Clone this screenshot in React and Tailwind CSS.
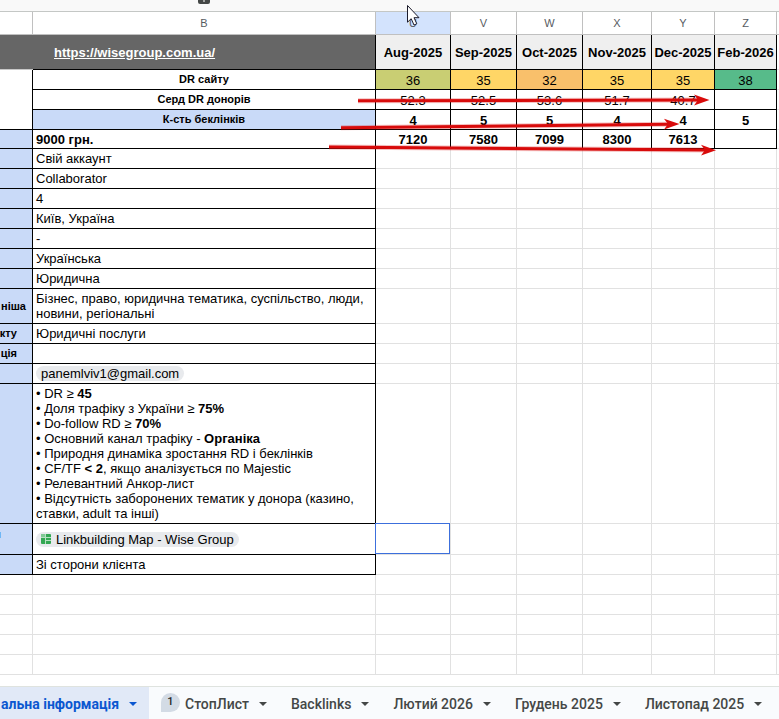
import React from "react";

const months = [
  { col: "U", name: "Aug-2025", dr: 36, color: "bg-[#c9ce73]", avg: "52.3", links: 4, spent: "7120" },
  { col: "V", name: "Sep-2025", dr: 35, color: "bg-[#ffd666]", avg: "52.5", links: 5, spent: "7580" },
  { col: "W", name: "Oct-2025", dr: 32, color: "bg-[#f9c06b]", avg: "53.6", links: 5, spent: "7099" },
  { col: "X", name: "Nov-2025", dr: 35, color: "bg-[#ffd666]", avg: "51.7", links: 4, spent: "8300" },
  { col: "Y", name: "Dec-2025", dr: 35, color: "bg-[#ffd666]", avg: "40.7", links: 4, spent: "7613" },
  { col: "Z", name: "Feb-2026", dr: 38, color: "bg-[#57bb8a]", avg: "", links: 5, spent: "" },
];

const cell = "border-r border-b px-[3px] overflow-hidden";
const dark = `${cell} border-black py-[2px] align-bottom`;
const light = `${cell} border-[#e1e1e1]`;
const number = `${cell} border-black pt-[3px] pb-px text-center align-bottom`;

function Requirements() {
  return (
    <ul>
      <li>• DR ≥ <b>45</b></li>
      <li>• Доля трафіку з України ≥ <b>75%</b></li>
      <li>• Do-follow RD ≥ <b>70%</b></li>
      <li>• Основний канал трафіку - <b>Органіка</b></li>
      <li>• Природня динаміка зростання RD і беклінків</li>
      <li>• CF/TF <b>&lt; 2</b>, якщо аналізується по Majestic</li>
      <li>• Релевантний Анкор-лист</li>
      <li>• Відсутність заборонених тематик у донора (казино, ставки, adult та інші)</li>
    </ul>
  );
}

function SheetIcon() {
  return (
    <svg className="size-[10px]" viewBox="0 0 10 10" aria-hidden="true">
      <rect width="10" height="10" rx="1" fill="#34a853" />
      <path d="M0 3.5h10M4.5 0v10M4.5 6.5h5.5" stroke="#b7e1c2" strokeWidth="1" />
      <path d="M0 0h4v3h-4z" fill="#81c995" />
    </svg>
  );
}

const chip = "flex w-fit items-center h-[15px] rounded-full bg-[#e8eaed] px-[5px]";

// Rows of the brief, with the visible end of each label in column A
const details = [
  { height: "h-[20px]", value: "Свій аккаунт" },
  { height: "h-[20px]", value: "Collaborator" },
  { height: "h-[20px]", value: "4" },
  { height: "h-[20px]", value: "Київ, Україна" },
  { height: "h-[20px]", value: "-" },
  { height: "h-[20px]", value: "Українська" },
  { height: "h-[20px]", value: "Юридична" },
  {
    height: "h-[35px]",
    label: "ніша",
    pad: "pr-[6px]",
    value: "Бізнес, право, юридична тематика, суспільство, люди, новини, регіональні",
  },
  { height: "h-[20px]", label: "кту", pad: "pr-[15px]", value: "Юридичні послуги" },
  { height: "h-[20px]", label: "ція", pad: "pr-[15px]", value: "" },
  { height: "h-[20px]", value: <span className={chip}>panemlviv1@gmail.com</span> },
  { height: "h-[140px]", value: <Requirements /> },
  {
    height: "h-[31px]",
    middle: true,
    selected: true,
    value: (
      <span className={`${chip} gap-[5px]`}>
        <SheetIcon />
        Linkbuilding Map - Wise Group
      </span>
    ),
  },
  { height: "h-[20px]", value: "Зі сторони клієнта" },
];

const emptyRows = [1, 2, 3, 4, 5];

function ColumnHeader({ children, active }) {
  return (
    <th
      className={`border-r border-b border-[#c0c0c0] text-[11px] leading-[15px] font-normal text-[#575b5f] ${
        active ? "bg-[#d3e3fd]" : "bg-white"
      }`}
    >
      {children}
    </th>
  );
}

function BlankCells({ selected }) {
  return (
    <>
      {months.map((m) => (
        <td key={m.col} className="relative border-r border-b border-[#e1e1e1]">
          {selected && m.col === "U" && (
            <div className="absolute -top-px -left-px right-0 bottom-0 border border-[#3c6fdc]" />
          )}
        </td>
      ))}
      <td className="border-b border-[#e1e1e1]" />
    </>
  );
}

function Sheet() {
  return (
    <table className="w-full table-fixed border-separate border-spacing-0 text-[13px] leading-[15px] text-black">
      <colgroup>
        <col className="w-[33px]" />
        <col />
        <col className="w-[75px]" />
        <col className="w-[66px]" />
        <col className="w-[66px]" />
        <col className="w-[69px]" />
        <col className="w-[63px]" />
        <col className="w-[62px]" />
        <col className="w-[2px]" />
      </colgroup>
      <thead>
        <tr className="h-[23px]">
          <ColumnHeader />
          <ColumnHeader>B</ColumnHeader>
          {months.map((m) => (
            <ColumnHeader key={m.col} active={m.col === "U"}>{m.col}</ColumnHeader>
          ))}
          <th className="border-b border-[#c0c0c0]" />
        </tr>
      </thead>
      <tbody>
        <tr className="h-[35px]">
          <td className="border-b border-[#c8c8c8] bg-[#666666]" />
          <td className="border-r border-b border-black bg-[#666666] pl-[21px] font-bold text-white">
            <a href="https://wisegroup.com.ua/" className="underline">https://wisegroup.com.ua/</a>
          </td>
          {months.map((m) => (
            <td key={m.col} className="border-r border-b border-black bg-[#efefef] text-center font-bold whitespace-nowrap">
              {m.name}
            </td>
          ))}
          <td className="border-b border-[#e1e1e1]" />
        </tr>
        <tr className="h-[20px]">
          <td rowSpan={3} className="border-r border-b border-black" />
          <td className={`${dark} text-center text-[11px] font-bold`}>DR сайту</td>
          {months.map((m) => (
            <td key={m.col} className={`${number} ${m.color}`}>{m.dr}</td>
          ))}
          <td className="border-b border-[#e1e1e1]" />
        </tr>
        <tr className="h-[20px]">
          <td className={`${dark} text-center text-[11px] font-bold`}>Серд DR донорів</td>
          {months.map((m) => (
            <td key={m.col} className={number}>{m.avg}</td>
          ))}
          <td className="border-b border-[#e1e1e1]" />
        </tr>
        <tr className="h-[20px]">
          <td className={`${dark} bg-[#c9daf8] text-center text-[11px] font-bold`}>К-сть беклінків</td>
          {months.map((m) => (
            <td key={m.col} className={`${number} font-bold`}>{m.links}</td>
          ))}
          <td className="border-b border-[#e1e1e1]" />
        </tr>
        <tr className="h-[19px]">
          <td className="border-r border-b border-black bg-[#c9daf8]" />
          <td className={`${cell} border-black font-bold`}>9000 грн.</td>
          {months.map((m) => (
            <td key={m.col} className={`${cell} border-black text-center font-bold`}>{m.spent}</td>
          ))}
          <td className="border-b border-[#e1e1e1]" />
        </tr>
        {details.map((row, i) => (
          <tr key={i} className={row.height}>
            <td className="overflow-hidden border-r border-b border-black bg-[#c9daf8] text-[11px] font-bold">
              {row.label && <div className={`flex justify-end ${row.pad}`}>{row.label}</div>}
              {row.selected && <div className="mb-2 h-[6px] w-px bg-[#6fb7f5]" />}
            </td>
            <td className={row.middle ? `${cell} border-black align-middle` : dark}>{row.value}</td>
            <BlankCells selected={row.selected} />
          </tr>
        ))}
        {emptyRows.map((n) => (
          <tr key={n} className="h-[20px]">
            <td className={light} />
            <td className={light} />
            <BlankCells />
          </tr>
        ))}
      </tbody>
    </table>
  );
}

// Red trend arrows drawn over the table, plus the mouse pointer
function Annotations() {
  return (
    <svg className="pointer-events-none absolute top-0 right-0" width="460" height="160" viewBox="319 0 460 160" aria-hidden="true">
      <g stroke="#d90b0b" strokeWidth="3">
        <path d="M358 100.8L700 100" />
        <path d="M341 127.8L670 124.2" />
        <path d="M329 147L707 150" />
      </g>
      <g stroke="#d90b0b" strokeWidth="5" strokeOpacity="0.25">
        <path d="M358 100.8L698 100" />
        <path d="M341 127.8L668 124.2" />
        <path d="M329 147L704 150" />
      </g>
      <g fill="#d90b0b">
        <path d="M709.5 100L694 105.5L698 100L694 94.5Z" />
        <path d="M679.5 124L664 129.5L668 124L664 118.7Z" />
        <path d="M716 150.2L701 155.5L705 150L701 144.7Z" />
      </g>
      <path
        d="M407.5 5.5V22.2L411.2 18.7L414 25L416.8 23.8L414 17.7H419Z"
        fill="#fff"
        stroke="#1b1b2b"
        strokeWidth="1"
      />
    </svg>
  );
}

function Tab({ children, badge, active }) {
  return (
    <button
      type="button"
      className={`flex h-8 shrink-0 items-center pt-[2px] text-[14px] whitespace-nowrap ${
        active ? "bg-[#e1e9f7] pr-3 font-bold text-[#0b57d0]" : "px-3 font-medium text-[#444746]"
      }`}
    >
      {badge && (
        <span className="mr-[5px] mb-1 flex size-[19px] items-center justify-center rounded-full rounded-bl-none bg-[#d3dbe5] text-[11px] text-[#1f1f1f]">
          {badge}
        </span>
      )}
      {children}
      <svg className="ml-[10px] h-1 w-2" viewBox="0 0 8 4" fill="currentColor" aria-hidden="true">
        <path d="M0 0H8L4 4Z" />
      </svg>
    </button>
  );
}

export default function App() {
  return (
    <div className="relative min-h-screen overflow-hidden bg-white font-['Liberation_Sans',Arial,sans-serif]">
      <div className="h-3 border-b border-[#c4c7c5] bg-[#f9f9f9] pl-[198px]">
        <div className="flex h-1 w-3 justify-center rounded-b-xs bg-[#444746]">
          <div className="h-[2px] w-[2px] bg-[#a0a2a1]" />
        </div>
      </div>
      <Sheet />
      <Annotations />
      <nav className="mt-[11px] flex border-t border-[#dfe3df] bg-[#f9fbfd] font-[Roboto,sans-serif]">
        <div className="flex w-[149px] shrink-0 justify-end bg-[#e1e9f7]">
          <Tab active>альна інформація</Tab>
        </div>
        <Tab badge="1">СтопЛист</Tab>
        <Tab>Backlinks</Tab>
        <Tab>Лютий 2026</Tab>
        <Tab>Грудень 2025</Tab>
        <Tab>Листопад 2025</Tab>
      </nav>
    </div>
  );
}
